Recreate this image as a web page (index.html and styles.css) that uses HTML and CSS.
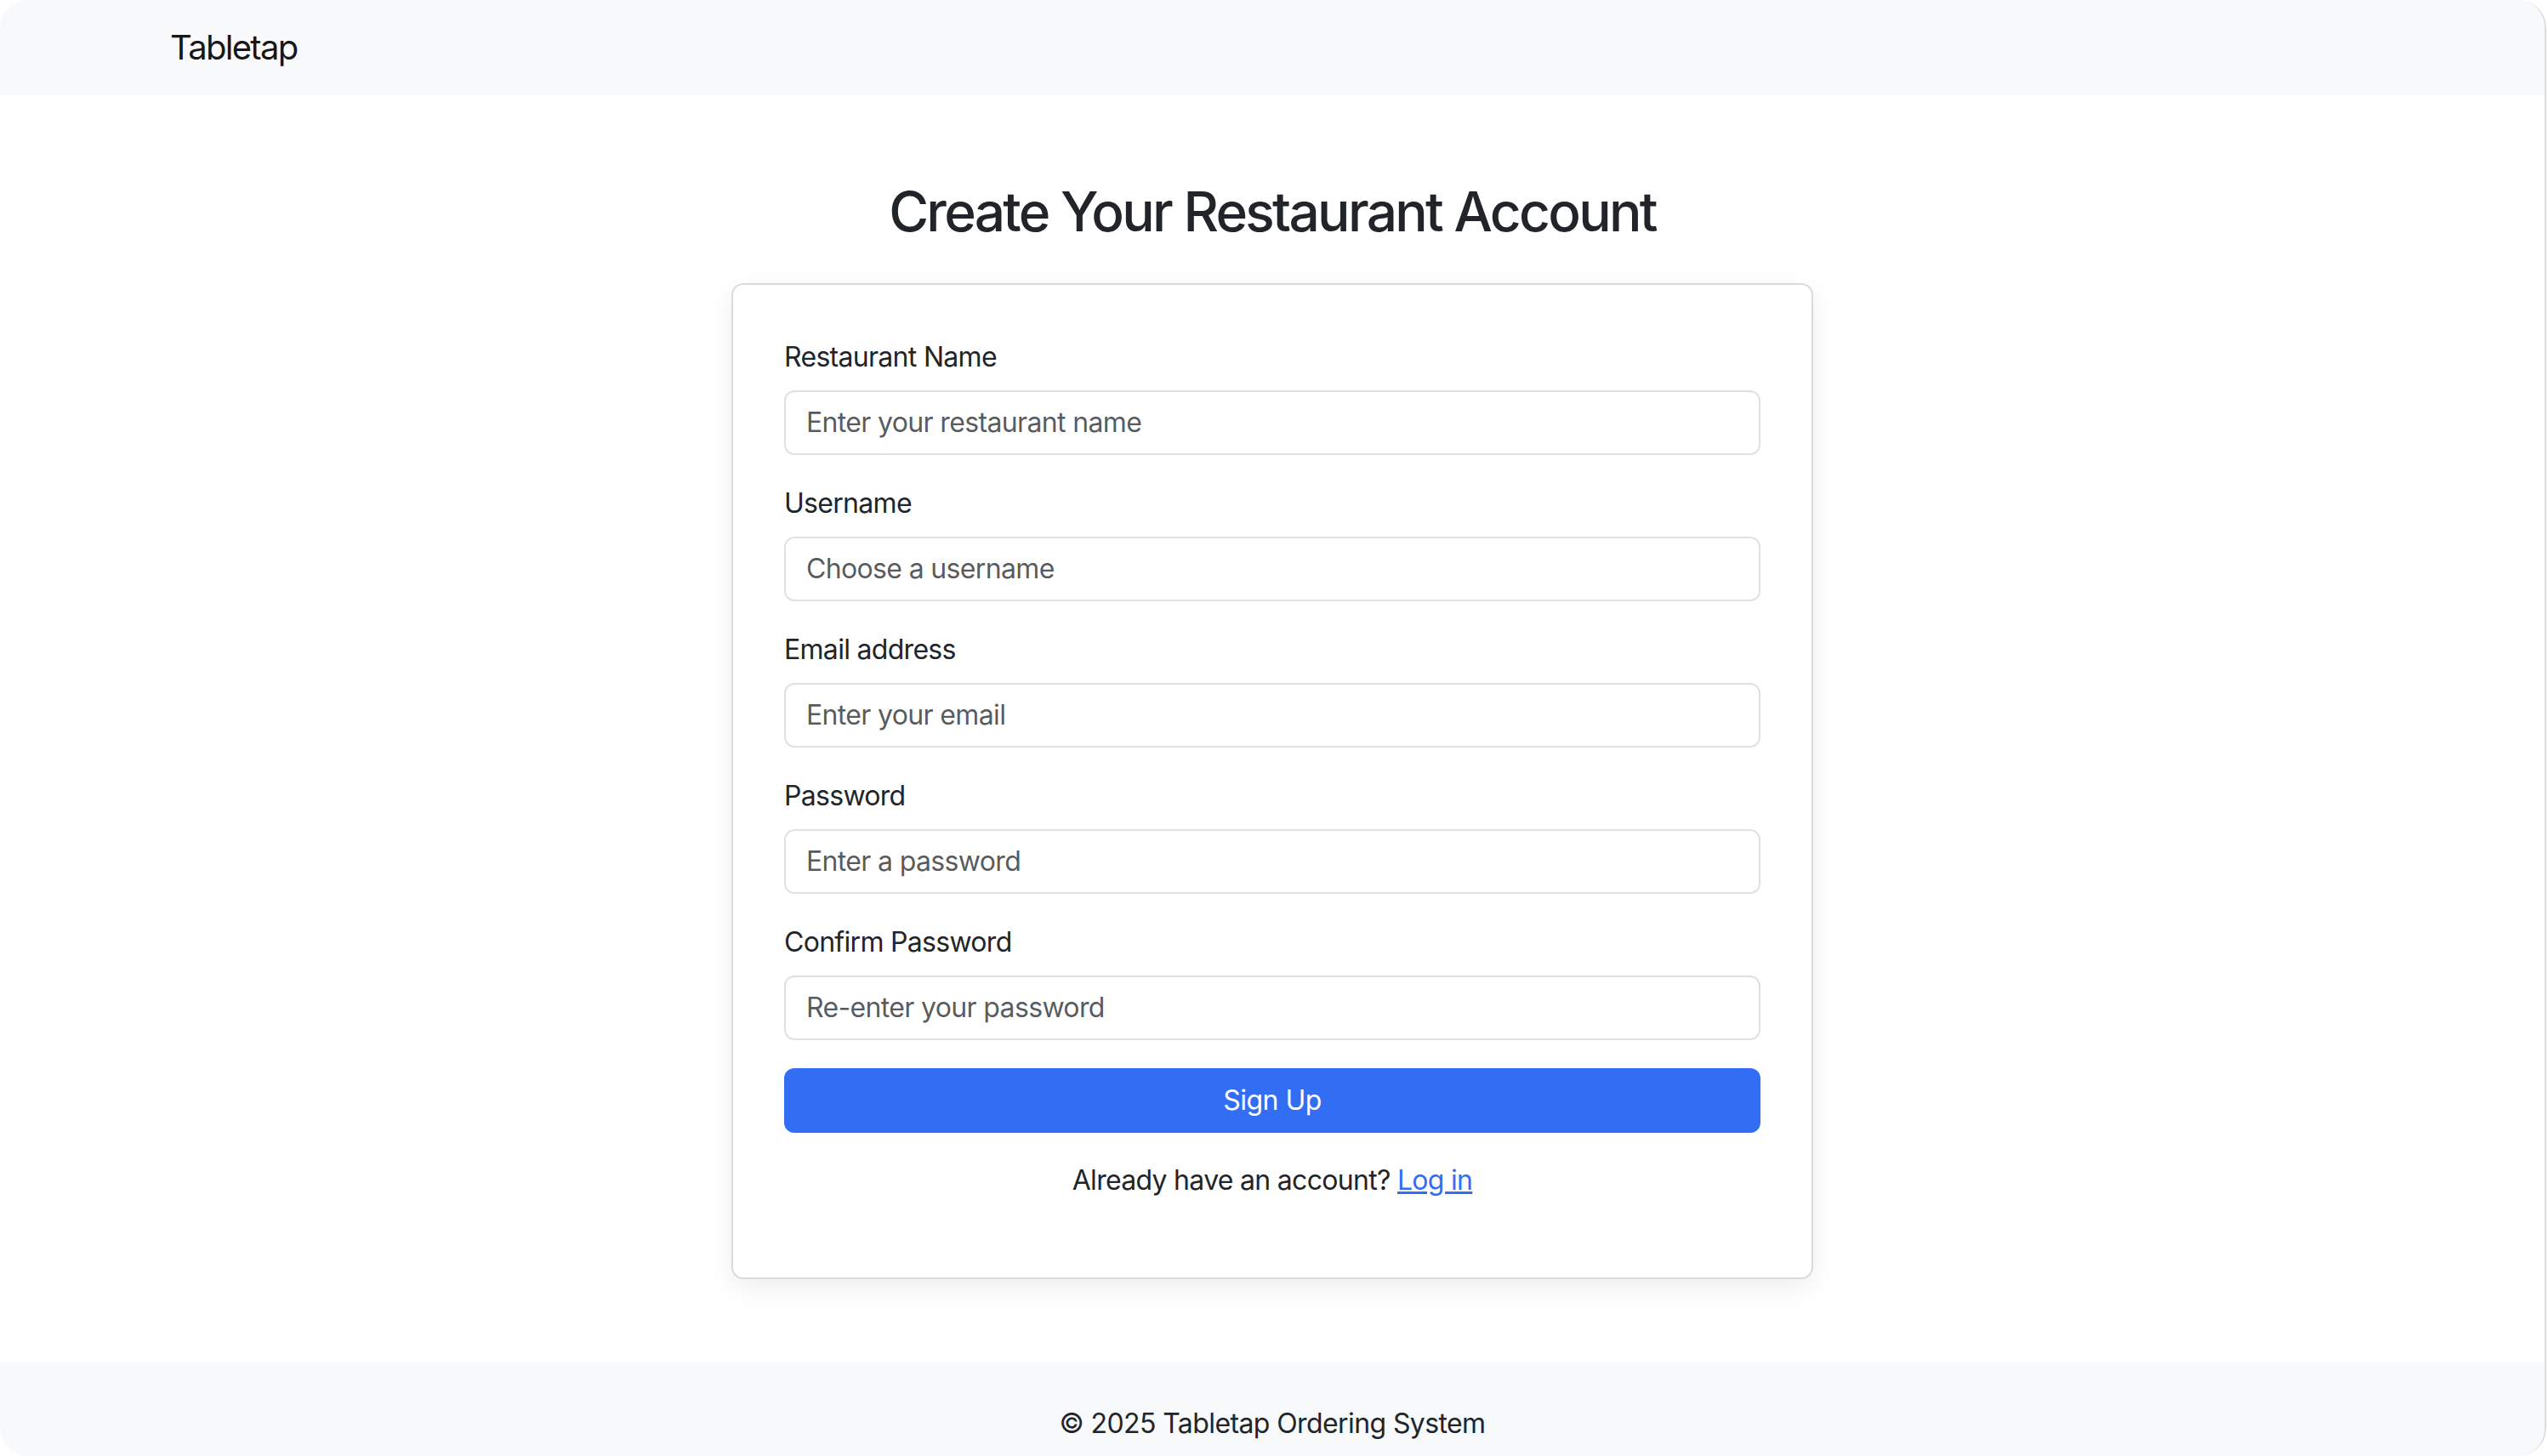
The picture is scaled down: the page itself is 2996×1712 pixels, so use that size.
FILE: index.html
```html
<!DOCTYPE html>
<html lang="en">
<head>
<meta charset="utf-8">
<title>Tabletap - Sign Up</title>
<link rel="stylesheet" href="styles.css">
</head>
<body>
<div class="window">
  <nav class="navbar">
    <a class="brand" href="#">Tabletap</a>
  </nav>
  <main class="main">
    <h2 class="title">Create Your Restaurant Account</h2>
    <div class="card">
      <form class="form">
        <div class="field">
          <label class="label" for="rname">Restaurant Name</label>
          <input class="input" id="rname" type="text" placeholder="Enter your restaurant name">
        </div>
        <div class="field">
          <label class="label" for="uname">Username</label>
          <input class="input" id="uname" type="text" placeholder="Choose a username">
        </div>
        <div class="field">
          <label class="label" for="email">Email address</label>
          <input class="input" id="email" type="email" placeholder="Enter your email">
        </div>
        <div class="field">
          <label class="label" for="pw">Password</label>
          <input class="input" id="pw" type="password" placeholder="Enter a password">
        </div>
        <div class="field">
          <label class="label" for="pw2">Confirm Password</label>
          <input class="input" id="pw2" type="password" placeholder="Re-enter your password">
        </div>
        <button class="btn" type="button">Sign Up</button>
      </form>
      <p class="login">Already have an account? <a class="link" href="#">Log in</a></p>
    </div>
  </main>
  <footer class="footer">© 2025 Tabletap Ordering System</footer>
</div>
</body>
</html>
```

FILE: styles.css
```css
html, body {
  margin: 0;
  padding: 0;
  background: #ffffff;
  overflow: hidden;
}

body {
  font-family: Inter, "Noto Sans", "Liberation Sans", sans-serif;
  color: #212529;
  letter-spacing: -0.7px;
}

.window {
  width: 2992px;
  height: 1712px;
  border-right: 2px solid #dcdcdc;
  border-radius: 33px;
  overflow: hidden;
  background: #ffffff;
  display: flex;
  flex-direction: column;
}

.navbar {
  flex: 0 0 auto;
  height: 112px;
  background: #f8f9fa;
  display: flex;
  align-items: center;
  padding-left: 200px;
}

.brand {
  font-size: 40px;
  line-height: 60px;
  letter-spacing: -1.7px;
  color: rgba(0, 0, 0, 0.92);
  text-decoration: none;
}

.main {
  flex: 0 0 auto;
  padding-top: 99px;
  display: flex;
  flex-direction: column;
  align-items: center;
}

.title {
  margin: 0 0 45px;
  font-size: 64px;
  font-weight: 500;
  line-height: 1.2;
  letter-spacing: -2.7px;
  text-align: center;
  color: #212529;
}

.card {
  width: 1272px;
  box-sizing: border-box;
  margin-bottom: 98px;
  padding: 61px 60px 60px;
  border: 2px solid rgba(0, 0, 0, 0.14);
  border-radius: 14px;
  background: #ffffff;
  box-shadow: 0 10px 30px rgba(0, 0, 0, 0.07);
}

.form {
  display: flex;
  flex-direction: column;
}

.field {
  display: flex;
  flex-direction: column;
  margin-bottom: 33px;
}

.label {
  font-size: 32px;
  line-height: 48px;
  margin-bottom: 15px;
  color: #212529;
}

.input {
  box-sizing: border-box;
  width: 100%;
  height: 76px;
  padding: 12px 24px;
  font-family: Inter, "Noto Sans", "Liberation Sans", sans-serif;
  font-size: 32px;
  line-height: 48px;
  letter-spacing: -0.65px;
  color: #212529;
  background: #ffffff;
  border: 2px solid #dee2e6;
  border-radius: 12px;
  outline: none;
}

.input::placeholder {
  color: rgba(33, 37, 41, 0.75);
}

.btn {
  width: 100%;
  height: 76px;
  border: 0;
  border-radius: 12px;
  background: #326ef3;
  color: #ffffff;
  font-family: Inter, "Noto Sans", "Liberation Sans", sans-serif;
  font-size: 32px;
  line-height: 48px;
  letter-spacing: -0.5px;
  cursor: pointer;
}

.login {
  margin: 32px 0 30px;
  font-size: 32px;
  line-height: 48px;
  text-align: center;
  color: #212529;
}

.link {
  color: #326ef3;
  text-decoration: underline;
}

.footer {
  flex: 0 0 auto;
  background: #f8f9fa;
  padding: 48px 0 48px;
  font-size: 32px;
  line-height: 48px;
  letter-spacing: -0.6px;
  text-align: center;
  color: #212529;
}
```
